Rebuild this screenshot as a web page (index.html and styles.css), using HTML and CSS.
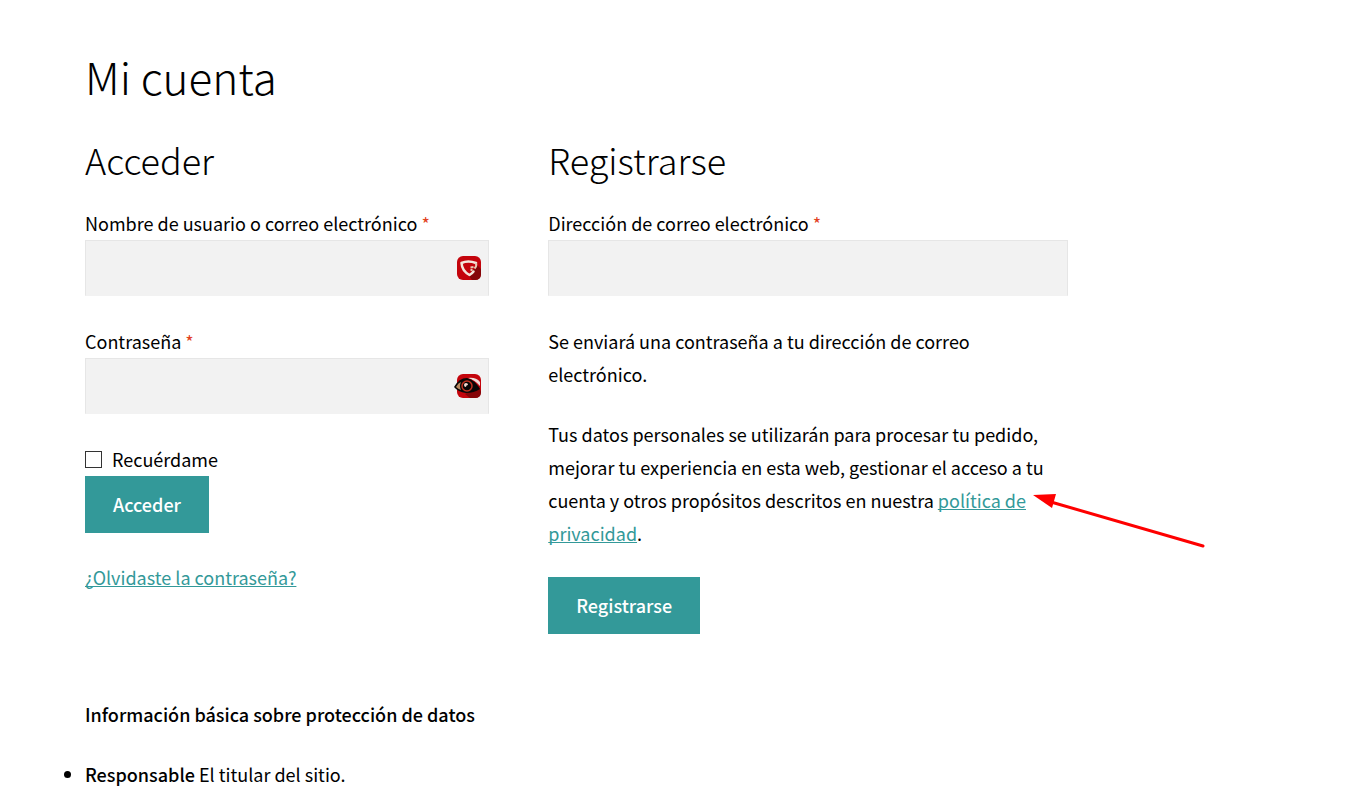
FILE: index.html
```html
<!DOCTYPE html>
<html lang="es">
<head>
  <meta charset="UTF-8">
  <meta name="viewport" content="width=device-width, initial-scale=1.0">
  <title>Mi cuenta</title>
  <link rel="stylesheet" href="styles.css">
</head>
<body>
  <main class="page">
    <h1>Mi cuenta</h1>

    <div class="account">
      <!-- Login -->
      <section class="login">
        <h2>Acceder</h2>
        <form>
          <div class="field">
            <label for="username">Nombre de usuario o correo electrónico <span class="required">*</span></label>
            <div class="input-wrap">
              <input type="text" id="username" name="username">
              <svg class="input-icon" viewBox="0 0 28 24" aria-hidden="true">
                <rect x="4" y="0" width="24" height="24" rx="6" fill="#c4040c"/>
                <path d="M16 20 L24 9 L28 13 V18 Q28 24 22 24 H19 Z" fill="#850508"/>
                <path d="M23 7 Q15 4 8.500 7 Q9 15 16.500 19 Q19 17.500 20.500 15.500" fill="none" stroke="#f3e6dc" stroke-width="2.500" stroke-linecap="round" stroke-linejoin="round"/>
                <path d="M23 7 Q24 10 21.500 12.500 M17.500 11.500 L20.500 11 M18.500 15 V13" fill="none" stroke="#e8c9b4" stroke-width="2"/>
              </svg>
            </div>
          </div>
          <div class="field">
            <label for="password">Contraseña <span class="required">*</span></label>
            <div class="input-wrap">
              <input type="password" id="password" name="password">
              <svg class="input-icon" viewBox="0 0 28 24" aria-hidden="true">
                <rect x="4" y="0" width="24" height="24" rx="6" fill="#c4040c"/>
                <path d="M12 20 L26 12 L28 18 Q28 24 22 24 H17 Z" fill="#850508"/>
                <path d="M15 4 Q23 3 27 8 V12 Q22 6 15 4 Z" fill="#eddcd8"/>
                <path d="M1 13 Q6 4 14 4 Q22 6 27 15 Q21 19 13 19 Q5 18 1 13 Z" fill="#080606"/>
                <path d="M3 13 Q5 9 8 8 Q6 12 8 16 Q5 15 3 13 Z" fill="#b98b62"/>
                <circle cx="14" cy="12" r="5" fill="#080606" stroke="#c0301f" stroke-width="1.500"/>
                <circle cx="13" cy="11" r="2" fill="#f2d8d0"/>
                <circle cx="15" cy="13" r="2" fill="#080606"/>
              </svg>
            </div>
          </div>
          <div class="actions">
            <label class="remember"><input type="checkbox" name="rememberme"> Recuérdame</label>
            <button type="submit">Acceder</button>
          </div>
          <p><a href="#">¿Olvidaste la contraseña?</a></p>
        </form>
      </section>

      <!-- Register -->
      <section class="register">
        <h2>Registrarse</h2>
        <form>
          <div class="field">
            <label for="email">Dirección de correo electrónico <span class="required">*</span></label>
            <input type="email" id="email" name="email">
          </div>
          <p>Se enviará una contraseña a tu dirección de correo electrónico.</p>
          <p class="privacy">
            Tus datos personales se utilizarán para procesar tu pedido, mejorar tu experiencia en esta web, gestionar el acceso a tu cuenta y otros propósitos descritos en nuestra <a href="#">política de privacidad</a>.
            <svg class="arrow" viewBox="0 0 172 54" aria-hidden="true">
              <path d="M18 8 L170 52" stroke="#fe0000" stroke-width="3" stroke-linecap="round"/>
              <path d="M0 1 L23 0 L19 14 Z" fill="#fe0000"/>
            </svg>
          </p>
          <button type="submit">Registrarse</button>
        </form>
      </section>
    </div>

    <!-- Data protection -->
    <section class="legal">
      <p><strong>Información básica sobre protección de datos</strong></p>
      <ul>
        <li><strong>Responsable</strong> El titular del sitio.</li>
      </ul>
    </section>
  </main>
</body>
</html>
```
FILE: styles.css
```css
* {
  box-sizing: border-box;
}
body {
  margin: 0;
  background-color: #fff;
  color: #000;
  font-family: "Noto Sans CJK SC", "Noto Sans", sans-serif;
  font-size: 18px;
  line-height: 33px;
}
.page {
  max-width: 1068px;
  margin-left: 85px;
  padding: 43px 85px 0 0;
}
h1, h2 {
  margin: 0;
  font-weight: 300;
}
h1 {
  margin-bottom: 28px;
  font-size: 44px;
  line-height: 66px;
}
h2 {
  margin-bottom: 26px;
  font-size: 36px;
  line-height: 44px;
}
.account {
  display: grid;
  grid-template-columns: 7fr 9fr;
  column-gap: 59px;
}
p {
  margin: 0 0 27px;
}
strong {
  font-weight: 500;
}
.field {
  margin-bottom: 29px;
}
.field label {
  display: block;
}
.required {
  color: #e2401c;
}
.field input {
  display: block;
  width: 100%;
  height: 56px;
  padding: 11px;
  border: 1px solid #e6e6e6;
  border-bottom-color: #f2f2f2;
  border-radius: 0;
  background-color: #f2f2f2;
  color: #111;
  font: inherit;
}
.input-wrap {
  position: relative;
}
.input-icon {
  position: absolute;
  top: 16px;
  right: 8px;
  width: 28px;
  height: 24px;
}
.actions {
  margin-bottom: 28px;
}
.remember {
  display: flex;
  align-items: center;
  gap: 10px;
}
.remember input {
  appearance: none;
  width: 17px;
  height: 17px;
  margin: 0;
  border: 1px solid #333;
  background-color: #fff;
}
.remember input:checked {
  background-color: #339999;
}
button {
  height: 57px;
  padding: 0 28px;
  border: 0;
  background-color: #339999;
  color: #fff;
  font: inherit;
  font-weight: 500;
  cursor: pointer;
}
button:hover {
  background-color: #267f7f;
}
a {
  color: #339999;
  text-decoration: underline;
  text-decoration-skip-ink: none;
}
.privacy {
  position: relative;
}
/* Points at the privacy policy link */
.arrow {
  position: absolute;
  top: 76px;
  left: 485px;
  width: 172px;
  height: 54px;
}
.legal {
  margin-top: 64px;
}
.legal ul {
  margin: 0;
  padding: 0;
}
```
